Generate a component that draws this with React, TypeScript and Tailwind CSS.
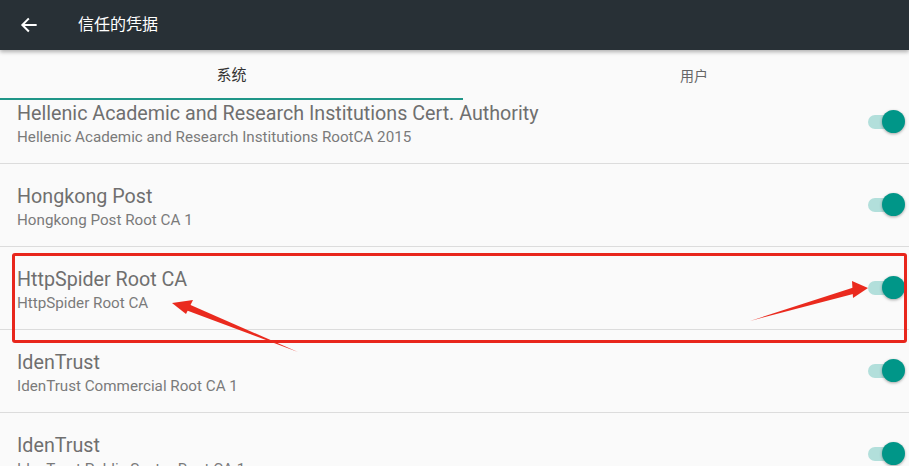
import React from "react";

type Cert = {
  issuer: string;
  name: string;
};

const certs: Cert[] = [
  {
    issuer: "Hellenic Academic and Research Institutions Cert. Authority",
    name: "Hellenic Academic and Research Institutions RootCA 2015",
  },
  { issuer: "Hongkong Post", name: "Hongkong Post Root CA 1" },
  { issuer: "HttpSpider Root CA", name: "HttpSpider Root CA" },
  { issuer: "IdenTrust", name: "IdenTrust Commercial Root CA 1" },
  { issuer: "IdenTrust", name: "IdenTrust Public Sector Root CA 1" },
];

const Toggle = () => (
  <div className="relative w-[38px] h-[24px] flex items-center">
    <div className="ml-[1px] w-[34px] h-[14px] rounded-full bg-[#b2dfdb]" />
    <div className="absolute right-0 top-[0px] w-[23px] h-[23px] rounded-full bg-[#009688] shadow-[0_1px_3px_rgba(0,0,0,0.35)]" />
  </div>
);

const CertRow = ({ cert, first }: { cert: Cert; first?: boolean }) => (
  <div
    className={`flex items-center justify-between pl-[17px] pr-[4px] h-[83px] border-b border-[#dcdcdc] ${
      first ? "-mt-[19px]" : ""
    }`}
  >
    <div className="flex flex-col pt-[4px]">
      <div className="text-[19.7px] leading-[25px] text-[#6f6f6f]">{cert.issuer}</div>
      <div className="text-[15.2px] leading-[22px] text-[#7a7a7a]">{cert.name}</div>
    </div>
    <Toggle />
  </div>
);

export default function App() {
  return (
    <div
      className="relative w-[909px] h-[466px] overflow-hidden bg-[#fafafa]"
      style={{ fontFamily: "Roboto, 'Noto Sans CJK SC', sans-serif" }}
    >
      <header className="relative z-10 h-[50px] bg-[#283036] flex items-center shadow-[0_2px_4px_rgba(0,0,0,0.3)]">
        <svg width="20" height="20" viewBox="0 0 24 24" className="ml-[19px]" fill="none">
          <path d="M20 12H5M11 5l-7 7 7 7" stroke="#fff" strokeWidth="2.4" strokeLinecap="square" />
        </svg>
        <div className="ml-[39px] text-white text-[16px]">信任的凭据</div>
      </header>

      <div className="flex h-[50px] bg-[#fafafa]">
        <div className="w-[463px] flex flex-col">
          <div className="flex-1 flex items-center justify-center text-[15px] text-[#333] pt-[2px]">系统</div>
          <div className="h-[2px] bg-[#1f9688]" />
        </div>
        <div className="flex-1 flex items-center justify-center text-[14px] text-[#666] pl-[16px] pt-[2px]">
          用户
        </div>
      </div>

      <div className="flex flex-col">
        {certs.map((cert, i) => (
          <CertRow key={i} cert={cert} first={i === 0} />
        ))}
      </div>

      {/* red markup over the HttpSpider row */}
      <div className="absolute left-[12px] top-[253px] w-[895px] h-[90px] border-[3px] border-[#e8261c] rounded-[3px]" />
      <svg className="absolute left-0 top-0 pointer-events-none" width="909" height="466">
        <polygon points="298,352 183,309 186,303" fill="#ea2a1e" />
        <polygon points="172,303 193,300 186,314" fill="#ea2a1e" />
        <polygon points="750,321 855,287 857,293" fill="#ea2a1e" />
        <polygon points="868,288 852,281 853,298" fill="#ea2a1e" />
      </svg>
    </div>
  );
}
